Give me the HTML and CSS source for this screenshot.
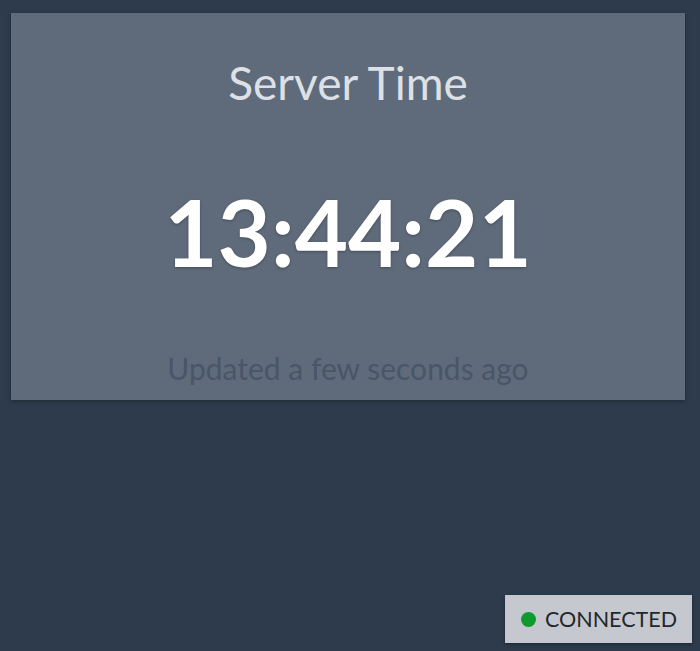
FILE: index.html
```html
<!DOCTYPE html>
<html>
<head>
<meta charset="utf-8">
<link rel="stylesheet" href="styles.css">
</head>
<body>
<div class="page">
  <div class="card">
    <div class="title">Server Time</div>
    <div class="time">13:44:21</div>
    <div class="updated">Updated a few seconds ago</div>
  </div>
  <div class="status">
    <span class="dot"></span>
    <span class="label">CONNECTED</span>
  </div>
</div>
</body>
</html>
```
FILE: styles.css
```css
html, body {
  margin: 0;
  padding: 0;
  height: 100%;
}
body {
  background: #2d3b4d;
  font-family: Lato, "Open Sans", sans-serif;
}
.page {
  height: 651px;
  display: flex;
  flex-direction: column;
  padding: 13px 15px 8px 11px;
  box-sizing: border-box;
}
.card {
  background: #5f6b7b;
  height: 387px;
  box-sizing: border-box;
  box-shadow: 0 1px 4px rgba(0,0,0,0.35);
  display: flex;
  flex-direction: column;
  align-items: center;
  padding-top: 42px;
}
.title {
  color: #dde1e6;
  font-size: 46px;
  line-height: 56px;
}
.time {
  color: #ffffff;
  font-weight: 700;
  font-size: 92px;
  line-height: 104px;
  margin-top: 69px;
  text-shadow: 0 1px 3px rgba(0,0,0,0.3);
}
.updated {
  color: #4a5567;
  font-size: 30px;
  line-height: 36px;
  margin-top: 66px;
}
.status {
  margin-top: auto;
  align-self: flex-end;
  margin-right: -7px;
  width: 187px;
  height: 48px;
  box-sizing: border-box;
  background: #c5c9cf;
  box-shadow: 0 1px 3px rgba(0,0,0,0.4);
  display: flex;
  align-items: center;
  padding-left: 16px;
  gap: 9px;
}
.dot {
  width: 15px;
  height: 15px;
  border-radius: 50%;
  background: #0f9a2f;
}
.label {
  color: #23272d;
  font-size: 21.5px;
}
```
